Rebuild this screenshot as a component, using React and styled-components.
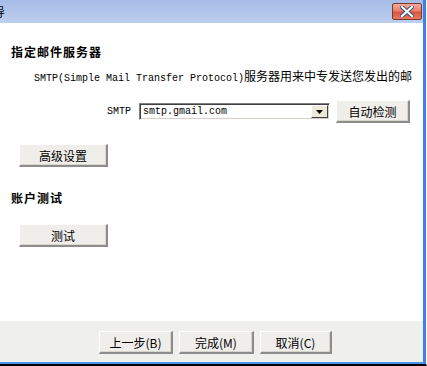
import React from "react";
import styled, { createGlobalStyle } from "styled-components";

const Global = createGlobalStyle`
  html, body { margin: 0; padding: 0; background: #fff; overflow: hidden; }
  body { font-family: "Noto Sans CJK SC", "Liberation Sans", sans-serif; font-size: 12px; color: #000; }
`;

const Frame = styled.div`
  width: 427px;
  height: 366px;
  box-sizing: border-box;
  border-bottom: 2px solid #000;
  border-right: 1px solid #fff;
  display: flex;
  flex-direction: column;
`;

const Inner = styled.div`
  flex: 1;
  display: flex;
  flex-direction: column;
  border-right: 3px solid #3d80e6;
  border-bottom: 2px solid #4a94ee;
  min-height: 0;
`;

const TitleBar = styled.div`
  height: 23px;
  flex: none;
  display: flex;
  align-items: center;
  justify-content: space-between;
  background: linear-gradient(#a5bce6, #b3c7ea 60%, #bccfee);
  overflow: hidden;
`;

const Title = styled.span`
  margin-left: -7px;
  font-size: 12px;
  line-height: 14px;
  color: #000;
`;

const CloseBtn = styled.div`
  width: 28px;
  height: 15px;
  margin-right: 1px;
  border: 1px solid #7a3a2c;
  border-radius: 2px;
  background: linear-gradient(#f2a99a, #e9806c 45%, #d9563f 55%, #e47a62);
  display: flex;
  align-items: center;
  justify-content: center;
`;

const Content = styled.div`
  flex: 1;
  background: #fff;
  padding: 22px 0 0 11px;
  display: flex;
  flex-direction: column;
`;

const Heading = styled.div`
  font-weight: bold;
  font-size: 12px;
  line-height: 14px;
  letter-spacing: 1px;
`;

const Desc = styled.div`
  margin: 10px 0 0 23px;
  line-height: 14px;
  white-space: nowrap;
`;

const Mono = styled.span`
  font-family: "Liberation Mono", monospace;
  font-size: 10px;
`;

const ServerRow = styled.div`
  display: flex;
  align-items: center;
  margin: 14px 0 0 96px;
  height: 23px;
`;

const Label = styled.span`
  font-family: "Liberation Mono", monospace;
  font-size: 10px;
  width: 32px;
`;

const Combo = styled.div`
  width: 191px;
  height: 17px;
  box-sizing: border-box;
  border-top: 1px solid #808080;
  border-left: 1px solid #808080;
  border-right: 1px solid #fff;
  border-bottom: 1px solid #fff;
  box-shadow: inset 1px 1px 0 #404040, inset -1px -1px 0 #d4d0c8;
  display: flex;
  align-items: center;
  padding-left: 3px;
  background: #fff;
`;

const ComboText = styled.span`
  flex: 1;
  font-family: "Liberation Mono", monospace;
  font-size: 10px;
`;

const DropBtn = styled.div`
  width: 17px;
  height: 13px;
  margin-right: 1px;
  box-sizing: border-box;
  background: #ece9d8;
  border-top: 1px solid #fff;
  border-left: 1px solid #fff;
  border-right: 1px solid #404040;
  border-bottom: 1px solid #404040;
  display: flex;
  align-items: center;
  justify-content: center;
`;

const Button = styled.button`
  width: ${(p) => p.$w || 89}px;
  height: 23px;
  box-sizing: border-box;
  padding: 0;
  margin: 0;
  font-family: "Noto Sans CJK SC", sans-serif;
  font-size: 12px;
  color: #000;
  background: #efeeea;
  border-top: 1px solid #fff;
  border-left: 1px solid #fff;
  border-right: 2px solid #8c8c8c;
  border-bottom: 2px solid #8c8c8c;
  box-shadow: inset -1px -1px 0 #d8d6cc;
  display: flex;
  align-items: center;
  justify-content: center;
`;

const AutoButton = styled(Button)`
  margin-left: 6px;
`;

const BlockButton = styled(Button)`
  margin-left: 8px;
  margin-top: ${(p) => p.$mt}px;
`;

const SubHeading = styled(Heading)`
  margin-top: ${(p) => p.$mt}px;
`;

const Footer = styled.div`
  height: 41px;
  flex: none;
  background: #efefeb;
  display: flex;
  gap: 6px;
  padding: 10px 0 0 99px;
  box-sizing: border-box;
`;

export default function App() {
  return (
    <>
      <Global />
      <Frame>
        <Inner>
          <TitleBar>
            <Title>导</Title>
            <CloseBtn>
              <svg width="14" height="11" viewBox="0 0 14 11">
                <path d="M2 1 L12 10 M12 1 L2 10" stroke="#2f4f7a" strokeWidth="4" strokeLinecap="square" />
                <path d="M2 1 L12 10 M12 1 L2 10" stroke="#fff" strokeWidth="2.2" strokeLinecap="square" />
              </svg>
            </CloseBtn>
          </TitleBar>
          <Content>
            <Heading>指定邮件服务器</Heading>
            <Desc>
              <Mono>SMTP(Simple Mail Transfer Protocol)</Mono>服务器用来中专发送您发出的邮
            </Desc>
            <ServerRow>
              <Label>SMTP</Label>
              <Combo>
                <ComboText>smtp.gmail.com</ComboText>
                <DropBtn>
                  <svg width="7" height="4" viewBox="0 0 7 4">
                    <path d="M0 0 H7 L3.5 4 Z" fill="#000" />
                  </svg>
                </DropBtn>
              </Combo>
              <AutoButton $w={74}>自动检测</AutoButton>
            </ServerRow>
            <BlockButton $mt={21}>高级设置</BlockButton>
            <SubHeading $mt={24}>账户测试</SubHeading>
            <BlockButton $mt={19}>测试</BlockButton>
          </Content>
          <Footer>
            <Button $w={74}>上一步(B)</Button>
            <Button $w={75}>完成(M)</Button>
            <Button $w={72}>取消(C)</Button>
          </Footer>
        </Inner>
      </Frame>
    </>
  );
}
